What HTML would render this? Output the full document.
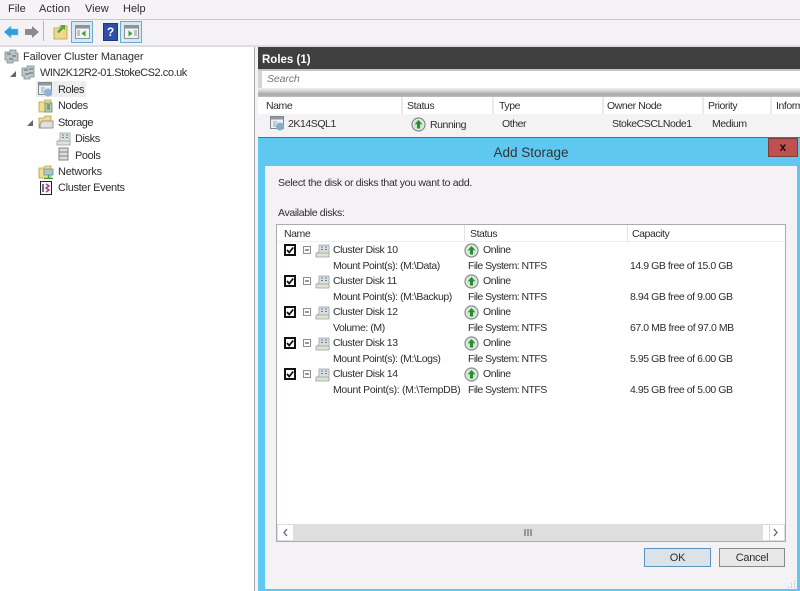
<!DOCTYPE html>
<html><head><meta charset="utf-8"><style>
html,body{margin:0;padding:0;background:#f5f2f6}
#p{position:relative;width:800px;height:591px;overflow:hidden;background:#f5f2f6;font:10.5px "Liberation Sans",sans-serif;color:#2e2e2e;filter:blur(.3px)}
#p div,#p svg{position:absolute}
.t{white-space:nowrap;line-height:14px;height:14px;letter-spacing:-.44px}
.n{font-size:11px;letter-spacing:-.42px}
</style></head><body><div id="p">
<svg width="0" height="0"><defs>
<g id="on"><circle cx="7.500" cy="7.500" r="6.500" fill="#e8ece8" stroke="#7f8f82" stroke-width="1.200"/><circle cx="7.500" cy="7.500" r="4.800" fill="#cfe3cf"/><path d="M7.500 3L11.200 7.300H9V11.500H6V7.300H3.800Z" fill="#249030"/></g>
<g id="disk"><path d="M1 13L4 8V2H14V13Z" fill="#d9dfe0" stroke="#9aa4a6" stroke-width=".8"/><path d="M1 10H14V14H1Z" fill="#e0e3d2" stroke="#9aa292" stroke-width=".8"/><path d="M6 4H8M10 4H12M6 6.500H8M10 6.500H12" stroke="#6a7c82"/></g>
<g id="folder"><path d="M1 4H6L7 2H13V14H1Z" fill="#f3dc8c" stroke="#b79c4e" stroke-width=".8"/></g>
<g id="cb"><rect x="1" y="1" width="10" height="10" fill="#fff" stroke="#111" stroke-width="2"/><path d="M3 6L5.200 8.500L9.200 3.500" fill="none" stroke="#111" stroke-width="1.800"/></g>
<g id="minus"><rect x=".5" y=".5" width="7" height="7" fill="#fff" stroke="#8a8f92"/><path d="M2 4H6" stroke="#333"/></g>
</defs></svg>

<div style="left:0;top:0;width:800px;height:19px;background:#f6f3f7"></div>
<div style="left:0;top:19px;width:800px;height:1px;background:#c9c8cb"></div>
<div class="t n" style="left:8px;top:2px;letter-spacing:0">File</div>
<div class="t n" style="left:39px;top:2px;letter-spacing:.1px">Action</div>
<div class="t n" style="left:85px;top:2px;letter-spacing:0">View</div>
<div class="t n" style="left:123px;top:2px;letter-spacing:0">Help</div>

<svg style="left:3px;top:25px" width="16" height="14"><path d="M1 7L8 1V4H15V10H8V13Z" fill="#2f9fdc" stroke="#7cc4ea" stroke-width=".5"/></svg>
<svg style="left:24px;top:25px" width="16" height="14"><path d="M15 7L8 1V4H1V10H8V13Z" fill="#8b8b8b"/></svg>
<div style="left:43px;top:21px;width:1px;height:20px;background:#b8b8ba"></div>
<svg style="left:53px;top:23px" width="15" height="17"><path d="M1 5H6L7 3H14V16H1Z" fill="#efd889" stroke="#b59a4b" stroke-width=".8"/><path d="M4 9L9 3L7 2H12V7L10.500 5.500L6 10Z" fill="#49a83a"/></svg>
<div style="left:71px;top:21px;width:20px;height:20px;border:1px solid #66add0;background:#d9e9f2"></div>
<svg style="left:75px;top:25px" width="15" height="14"><rect x=".5" y=".5" width="14" height="13" fill="#f2f2f2" stroke="#8d9398"/><rect x="1" y="1" width="13" height="2.500" fill="#8d9398"/><path d="M10.500 5.500V11.500L6.500 8.500Z" fill="#35a040"/><path d="M2 6H5M2 8H5M2 10H5" stroke="#8d9398"/></svg>
<div style="left:103px;top:23px;width:13px;height:16px;background:#2e4fa8;border:1px solid #1f3780;color:#fff;font:bold 12px/16px 'Liberation Sans',sans-serif;text-align:center">?</div>
<div style="left:120px;top:21px;width:20px;height:20px;border:1px solid #66add0;background:#d9e9f2"></div>
<svg style="left:124px;top:25px" width="15" height="14"><rect x=".5" y=".5" width="14" height="13" fill="#f2f2f2" stroke="#8d9398"/><rect x="1" y="1" width="13" height="2.500" fill="#8d9398"/><path d="M4.500 5.500V11.500L8.500 8.500Z" fill="#35a040"/><path d="M10 6H13M10 8H13M10 10H13" stroke="#8d9398"/></svg>

<div style="left:0;top:45px;width:800px;height:2px;background:#dedde0"></div>
<div style="left:0;top:47px;width:254px;height:544px;background:#fff;border-right:1px solid #a8a8aa"></div>
<div style="left:36px;top:81px;width:50px;height:16px;background:#eeeeef"></div>

<svg style="left:4px;top:49px" width="15" height="15"><path d="M1 3H6V1H12V4H14V12H9V14H3V11H1Z" fill="#b9c2c4" stroke="#7d8a8c" stroke-width=".8"/><path d="M3 5H7M8 7H12M5 10H9" stroke="#56686c"/></svg>
<div class="t n" style="left:23px;top:50px;letter-spacing:-.13px">Failover Cluster Manager</div>
<svg style="left:10px;top:71px" width="7" height="7"><path d="M6 0V6H0Z" fill="#666"/></svg>
<svg style="left:21px;top:65px" width="15" height="15"><path d="M1 3H6V1H13V12H9V14H3V11H1Z" fill="#bcc7c9" stroke="#7d8a8c" stroke-width=".8"/><path d="M3 5H7M8 4H12M8 8H12M4 9H8" stroke="#56686c"/></svg>
<div class="t n" style="left:40px;top:66px;letter-spacing:-.45px">WIN2K12R2-01.StokeCS2.co.uk</div>

<svg style="left:38px;top:82px" width="15" height="15"><rect x=".5" y=".5" width="13" height="12" fill="#eef1f3" stroke="#7f8a90"/><rect x="1" y="1" width="12" height="2.500" fill="#8e9aa2"/><circle cx="10" cy="10.500" r="4" fill="#8cb4d8"/><path d="M3 6H7M3 8H6M3 10H6" stroke="#9aa4aa"/></svg>
<div class="t n" style="left:58px;top:83px">Roles</div>

<svg style="left:38px;top:98px" width="15" height="15"><use href="#folder"/><path d="M7 5H14V14H7Z" fill="#b5cdb0" stroke="#6e8a70" stroke-width=".8"/><path d="M9 7H12M9 9H12M9 11H12" stroke="#4e6a52"/></svg>
<div class="t n" style="left:58px;top:99px">Nodes</div>

<svg style="left:27px;top:120px" width="7" height="7"><path d="M6 0V6H0Z" fill="#666"/></svg>
<svg style="left:38px;top:114px" width="16" height="16"><use href="#folder"/><path d="M2 10L4 7H15V14H2Z" fill="#dfe1dc" stroke="#7c8680" stroke-width=".8"/></svg>
<div class="t n" style="left:58px;top:116px;letter-spacing:-.5px">Storage</div>

<svg style="left:56px;top:131px" width="15" height="15"><use href="#disk"/></svg>
<div class="t n" style="left:75px;top:132px">Disks</div>
<svg style="left:58px;top:147px" width="12" height="15"><rect x="1" y="1" width="9" height="4" fill="#dcdedc" stroke="#7e8482"/><rect x="1" y="5" width="9" height="4" fill="#dcdedc" stroke="#7e8482"/><rect x="1" y="9" width="9" height="4" fill="#dcdedc" stroke="#7e8482"/></svg>
<div class="t n" style="left:75px;top:149px">Pools</div>

<svg style="left:38px;top:164px" width="16" height="16"><use href="#folder"/><path d="M6 5H15V11H6Z" fill="#a9c6cc" stroke="#6d8a90" stroke-width=".8"/><path d="M10.500 11V14M6 14.500H15" stroke="#3aa045" stroke-width="1.200"/></svg>
<div class="t n" style="left:58px;top:165px;letter-spacing:-.25px">Networks</div>
<svg style="left:39px;top:181px" width="14" height="15"><rect x="1.500" y=".5" width="11" height="13" fill="#f8f8f8" stroke="#222"/><path d="M4 3V11" stroke="#445" stroke-width="1.500"/><path d="M7 3L10 5L7 7L10 9L7 11" fill="none" stroke="#b03c8c" stroke-width="1.500"/></svg>
<div class="t n" style="left:58px;top:181px;letter-spacing:-.35px">Cluster Events</div>

<div style="left:258px;top:47px;width:542px;height:22px;background:#3f3f3f"></div>
<div class="t" style="left:262px;top:53px;color:#fff;font-weight:bold;font-size:11.500px;letter-spacing:0">Roles (1)</div>
<div style="left:258px;top:69px;width:542px;height:2px;background:#c4c4c6"></div>
<div style="left:258px;top:71px;width:4px;height:20px;background:#d4d4d6"></div>
<div style="left:262px;top:71px;width:538px;height:17px;background:#fff"></div>
<div class="t" style="left:267px;top:72px;font-style:italic;color:#777;letter-spacing:-.1px">Search</div>
<div style="left:258px;top:88px;width:542px;height:9px;background:linear-gradient(#eee,#d6d6d8 30%,#a8a8aa 70%,#c0c0c2)"></div>
<div style="left:258px;top:97px;width:542px;height:17px;background:#fff"></div>
<div style="left:258px;top:114px;width:542px;height:20px;background:#f5f2f6"></div>
<div style="left:401px;top:97px;width:2px;height:17px;background:#eaeaec"></div>
<div style="left:492px;top:97px;width:2px;height:17px;background:#eaeaec"></div>
<div style="left:602px;top:97px;width:2px;height:17px;background:#eaeaec"></div>
<div style="left:702px;top:97px;width:2px;height:17px;background:#eaeaec"></div>
<div style="left:770px;top:97px;width:2px;height:17px;background:#eaeaec"></div>
<div class="t" style="left:266px;top:99px">Name</div>
<div class="t" style="left:407px;top:99px">Status</div>
<div class="t" style="left:499px;top:99px">Type</div>
<div class="t" style="left:607px;top:99px">Owner Node</div>
<div class="t" style="left:708px;top:99px">Priority</div>
<div class="t" style="left:776px;top:99px">Inform</div>
<svg style="left:270px;top:116px" width="15" height="15"><rect x=".5" y=".5" width="13" height="12" fill="#eef1f3" stroke="#7f8a90"/><rect x="1" y="1" width="12" height="2.500" fill="#8e9aa2"/><circle cx="10" cy="10.500" r="4" fill="#7fb0c8"/><path d="M3 6H7M3 8H6M3 10H6" stroke="#9aa4aa"/></svg>
<div class="t" style="left:288px;top:117px">2K14SQL1</div>
<svg style="left:411px;top:117px" width="15" height="15"><use href="#on"/></svg>
<div class="t" style="left:430px;top:118px">Running</div>
<div class="t" style="left:502px;top:117px">Other</div>
<div class="t" style="left:612px;top:117px">StokeCSCLNode1</div>
<div class="t" style="left:712px;top:117px">Medium</div>

<div style="left:258px;top:137px;width:542px;height:454px;background:#5ec8f0;border-top:1px solid #2f7f9c;box-sizing:border-box"></div>
<div class="t" style="left:258px;top:146px;width:546px;text-align:center;font-size:13.500px;color:#333;letter-spacing:0">Add Storage</div>
<div style="left:768px;top:138px;width:30px;height:19px;background:#c0504f;border:1px solid #7f3a3a;box-sizing:border-box;color:#111;font:bold 12px/16px 'Liberation Sans',sans-serif;text-align:center">x</div>
<div style="left:265px;top:166px;width:532px;height:423px;background:#f5f2f6"></div>
<div class="t" style="left:278px;top:176px;letter-spacing:-.3px">Select the disk or disks that you want to add.</div>
<div class="t" style="left:278px;top:206px;letter-spacing:-.36px">Available disks:</div>

<div style="left:276px;top:224px;width:510px;height:318px;background:#fff;border:1px solid #a8acb0;box-sizing:border-box"></div>
<div style="left:464px;top:225px;width:1px;height:16px;background:#e4e4e6"></div>
<div style="left:627px;top:225px;width:1px;height:16px;background:#e4e4e6"></div>
<div style="left:277px;top:241px;width:508px;height:1px;background:#eeeeee"></div>
<div class="t" style="left:284px;top:227px">Name</div>
<div class="t" style="left:470px;top:227px">Status</div>
<div class="t" style="left:632px;top:227px">Capacity</div>

<svg style="left:284px;top:244px" width="12" height="12"><use href="#cb"/></svg>
<svg style="left:303px;top:246px" width="8" height="8"><use href="#minus"/></svg>
<svg style="left:315px;top:243px" width="15" height="15"><use href="#disk"/></svg>
<div class="t" style="left:333px;top:243px">Cluster Disk 10</div>
<svg style="left:464px;top:243px" width="15" height="15"><use href="#on"/></svg>
<div class="t" style="left:483px;top:243px">Online</div>
<div class="t" style="left:333px;top:259px">Mount Point(s): (M:\Data)</div>
<div class="t" style="left:468px;top:259px;letter-spacing:-.55px">File System: NTFS</div>
<div class="t" style="left:630px;top:259px">14.9 GB free of 15.0 GB</div>

<svg style="left:284px;top:275px" width="12" height="12"><use href="#cb"/></svg>
<svg style="left:303px;top:277px" width="8" height="8"><use href="#minus"/></svg>
<svg style="left:315px;top:274px" width="15" height="15"><use href="#disk"/></svg>
<div class="t" style="left:333px;top:274px">Cluster Disk 11</div>
<svg style="left:464px;top:274px" width="15" height="15"><use href="#on"/></svg>
<div class="t" style="left:483px;top:274px">Online</div>
<div class="t" style="left:333px;top:290px">Mount Point(s): (M:\Backup)</div>
<div class="t" style="left:468px;top:290px;letter-spacing:-.55px">File System: NTFS</div>
<div class="t" style="left:630px;top:290px">8.94 GB free of 9.00 GB</div>

<svg style="left:284px;top:306px" width="12" height="12"><use href="#cb"/></svg>
<svg style="left:303px;top:308px" width="8" height="8"><use href="#minus"/></svg>
<svg style="left:315px;top:305px" width="15" height="15"><use href="#disk"/></svg>
<div class="t" style="left:333px;top:305px">Cluster Disk 12</div>
<svg style="left:464px;top:305px" width="15" height="15"><use href="#on"/></svg>
<div class="t" style="left:483px;top:305px">Online</div>
<div class="t" style="left:333px;top:321px">Volume: (M)</div>
<div class="t" style="left:468px;top:321px;letter-spacing:-.55px">File System: NTFS</div>
<div class="t" style="left:630px;top:321px">67.0 MB free of 97.0 MB</div>

<svg style="left:284px;top:337px" width="12" height="12"><use href="#cb"/></svg>
<svg style="left:303px;top:339px" width="8" height="8"><use href="#minus"/></svg>
<svg style="left:315px;top:336px" width="15" height="15"><use href="#disk"/></svg>
<div class="t" style="left:333px;top:336px">Cluster Disk 13</div>
<svg style="left:464px;top:336px" width="15" height="15"><use href="#on"/></svg>
<div class="t" style="left:483px;top:336px">Online</div>
<div class="t" style="left:333px;top:352px">Mount Point(s): (M:\Logs)</div>
<div class="t" style="left:468px;top:352px;letter-spacing:-.55px">File System: NTFS</div>
<div class="t" style="left:630px;top:352px">5.95 GB free of 6.00 GB</div>

<svg style="left:284px;top:368px" width="12" height="12"><use href="#cb"/></svg>
<svg style="left:303px;top:370px" width="8" height="8"><use href="#minus"/></svg>
<svg style="left:315px;top:367px" width="15" height="15"><use href="#disk"/></svg>
<div class="t" style="left:333px;top:367px">Cluster Disk 14</div>
<svg style="left:464px;top:367px" width="15" height="15"><use href="#on"/></svg>
<div class="t" style="left:483px;top:367px">Online</div>
<div class="t" style="left:333px;top:383px;letter-spacing:-.32px">Mount Point(s): (M:\TempDB)</div>
<div class="t" style="left:468px;top:383px;letter-spacing:-.55px">File System: NTFS</div>
<div class="t" style="left:630px;top:383px">4.95 GB free of 5.00 GB</div>

<div style="left:277px;top:524px;width:508px;height:17px;background:#dedede"></div>
<div style="left:278px;top:525px;width:15px;height:15px;background:#fff"></div>
<div style="left:763px;top:525px;width:21px;height:15px;background:#fff"></div>
<div style="left:769px;top:525px;width:1px;height:15px;background:#d4d4d4"></div>
<svg style="left:282px;top:528px" width="8" height="9"><path d="M5 1L2 4.500L5 8" fill="none" stroke="#666" stroke-width="1.300"/></svg>
<svg style="left:772px;top:528px" width="8" height="9"><path d="M2 1L5 4.500L2 8" fill="none" stroke="#666" stroke-width="1.300"/></svg>
<svg style="left:524px;top:529px" width="9" height="7"><path d="M1 0V7M4 0V7M7 0V7" stroke="#666" stroke-width="1.200"/></svg>

<div style="left:644px;top:548px;width:67px;height:19px;background:#dae3ea;border:1px solid #5c93ba;box-sizing:border-box;text-align:center;line-height:18px;font-size:11px;letter-spacing:-.2px">OK</div>
<div style="left:719px;top:548px;width:66px;height:19px;background:#e8e8e8;border:1px solid #8a8a8a;box-sizing:border-box;text-align:center;line-height:18px;font-size:11px;letter-spacing:-.3px">Cancel</div>
<svg style="left:788px;top:580px" width="8" height="8"><path d="M6 1H7M6 4H7M3 4H4M6 7H7M3 7H4M0 7H1" stroke="#aaa"/></svg>
</div></body></html>
